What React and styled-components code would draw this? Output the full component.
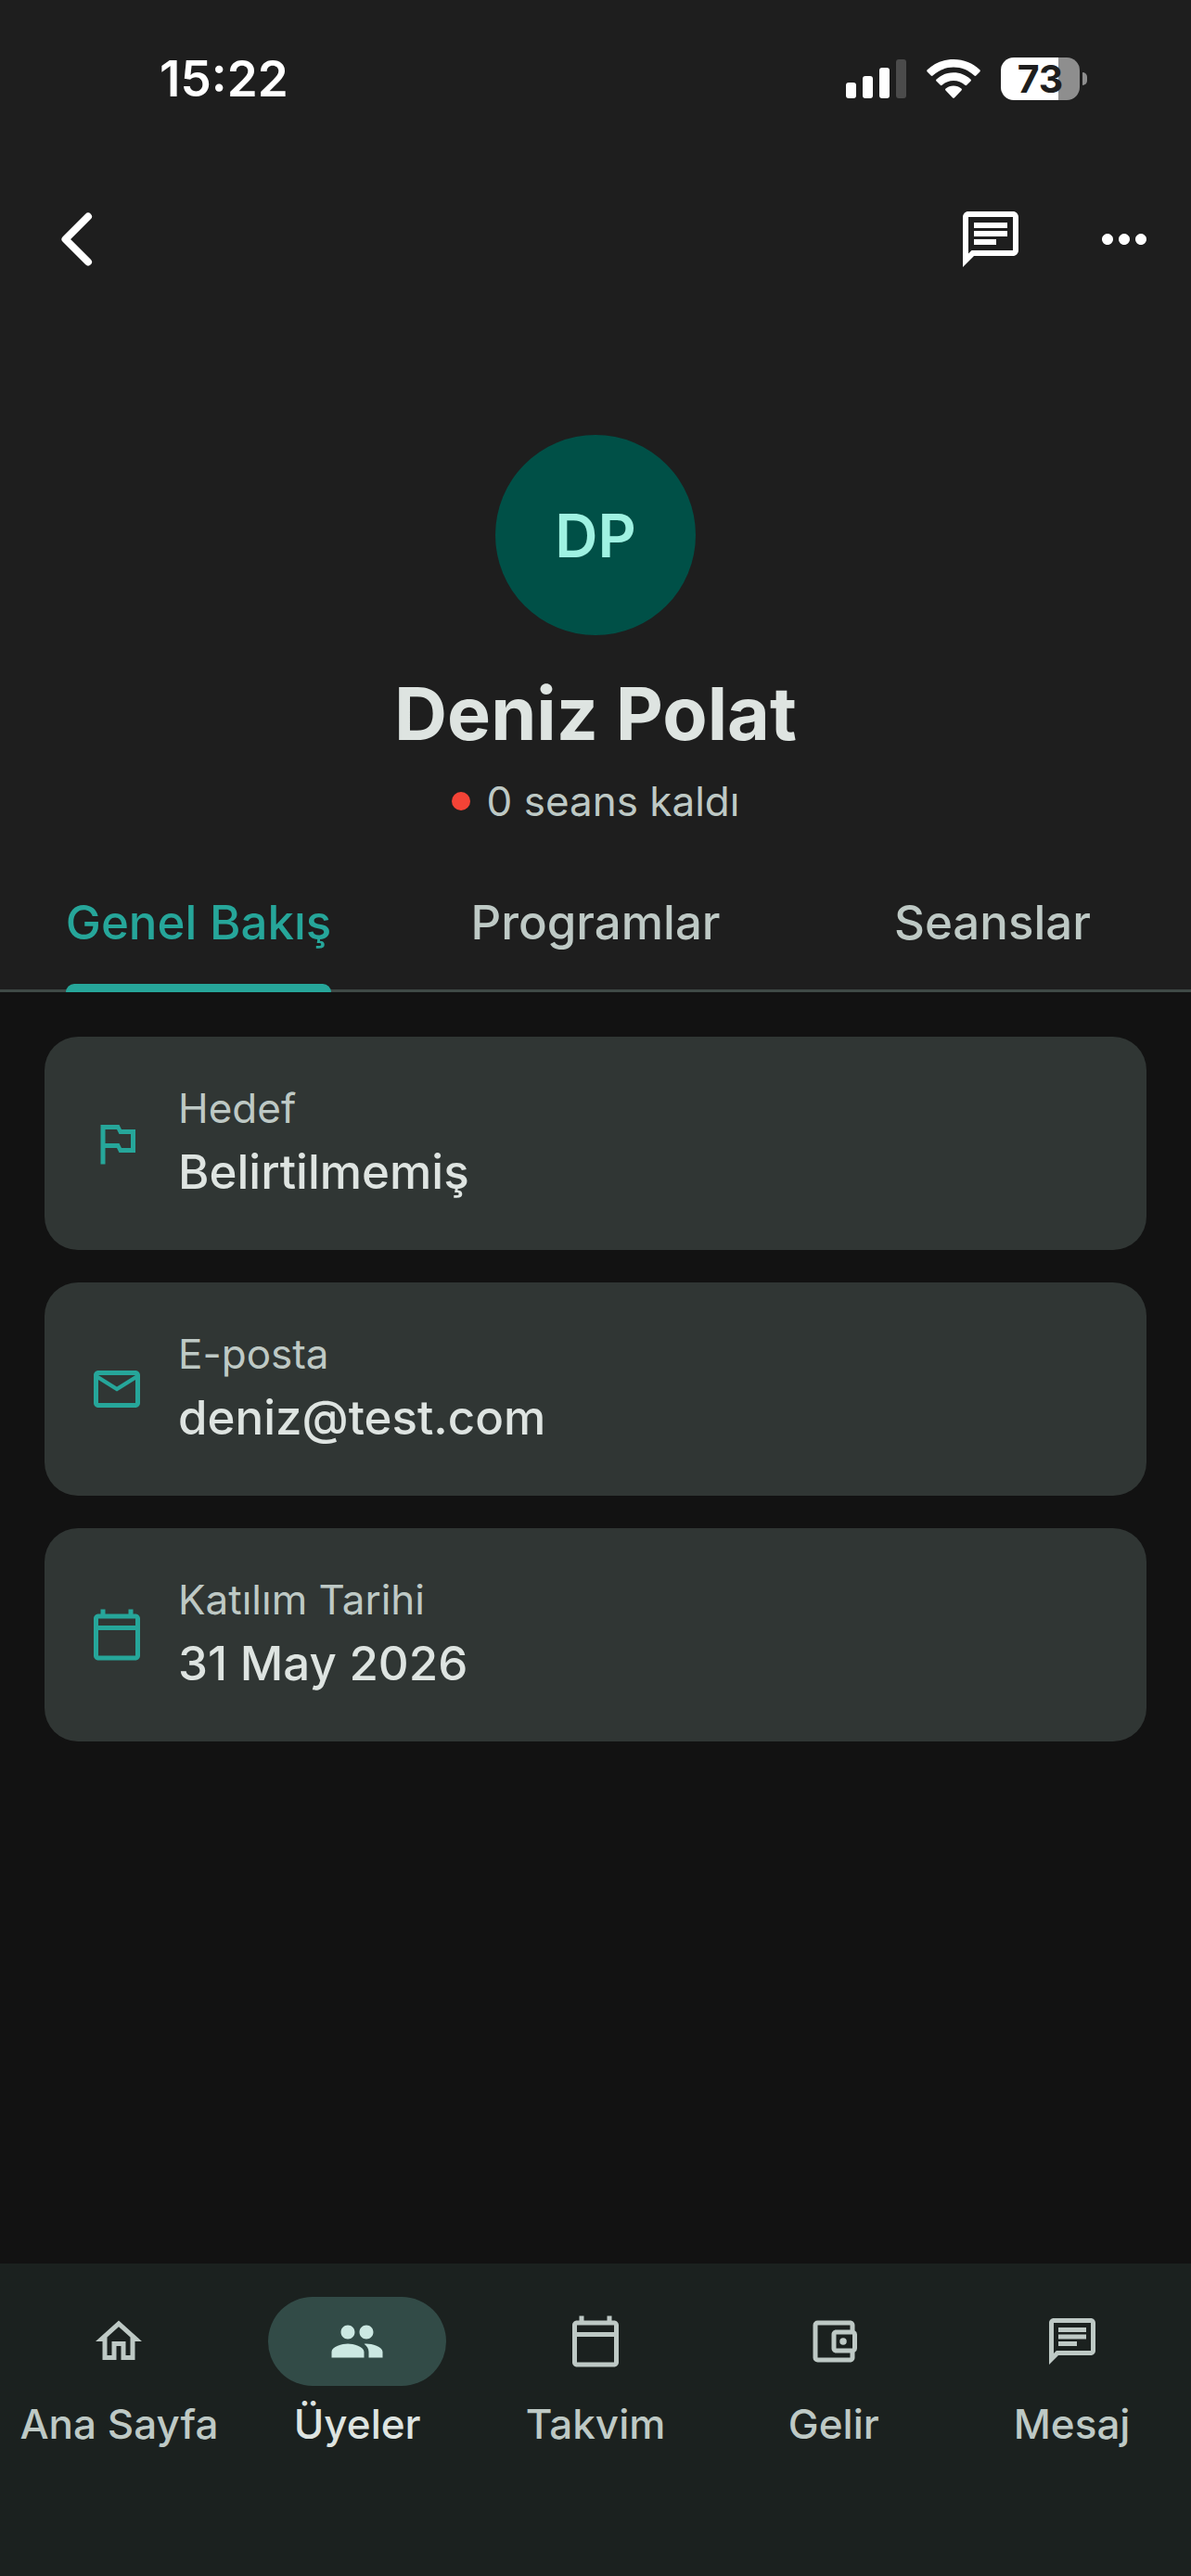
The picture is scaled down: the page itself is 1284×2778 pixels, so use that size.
import React, { useState } from 'react'
import styled, { createGlobalStyle } from 'styled-components'
import {
  MdMailOutline,
  MdMoreHoriz,
  MdOutlineAccountBalanceWallet,
  MdOutlineCalendarToday,
  MdOutlineChat,
  MdOutlineHome,
  MdOutlinedFlag,
  MdPeople,
} from 'react-icons/md'

const colors = {
  background: '#121212',
  header: '#1e1e1e',
  card: '#303634',
  nav: '#1b211f',
  pill: '#324b47',
  pillIcon: '#cce8e2',
  teal: '#26a69a',
  avatar: '#005047',
  avatarText: '#9ff2e2',
  text: '#dee4e1',
  muted: '#bec9c5',
  divider: '#3f4946',
  red: '#f44336',
  white: '#ffffff',
}

const tabs = ['Genel Bakış', 'Programlar', 'Seanslar']

const details = [
  { label: 'Hedef', value: 'Belirtilmemiş', Icon: MdOutlinedFlag },
  { label: 'E-posta', value: 'deniz@test.com', Icon: MdMailOutline },
  { label: 'Katılım Tarihi', value: '31 May 2026', Icon: MdOutlineCalendarToday },
]

const navigationOptions = [
  { text: 'Ana Sayfa', Icon: MdOutlineHome },
  { text: 'Üyeler', Icon: MdPeople, active: true },
  { text: 'Takvim', Icon: MdOutlineCalendarToday },
  { text: 'Gelir', Icon: MdOutlineAccountBalanceWallet },
  { text: 'Mesaj', Icon: MdOutlineChat },
]

const GlobalStyle = createGlobalStyle`
  * {
    box-sizing: border-box;
  }

  body {
    margin: 0;
    background: ${colors.background};
    color: ${colors.text};
    font-family: Inter, Roboto, sans-serif;
    font-optical-sizing: none;
  }

  button {
    padding: 0;
    border: 0;
    background: none;
    color: inherit;
    font: inherit;
    cursor: pointer;
  }

  svg {
    display: block;
    flex: none;
  }
`

const Page = styled.div`
  display: flex;
  flex-direction: column;
  min-height: 100vh;
`

const Header = styled.header`
  background: ${colors.header};
`

const StatusBar = styled.div`
  display: flex;
  justify-content: space-between;
  align-items: center;
  height: 174px;
  padding: 0 112px 4px 172px;
  color: ${colors.white};
`

const Clock = styled.time`
  font-size: 53px;
  font-weight: 600;
  line-height: 64px;
`

const StatusIcons = styled.div`
  display: flex;
  align-items: center;
  gap: 22px;
`

const Battery = styled.div`
  display: flex;
  align-items: center;
  gap: 3px;
`

const BatteryBody = styled.div`
  width: 85px;
  border-radius: 14px;
  background: linear-gradient(to right, ${colors.white} 73%, #8e8e8e 73%);
  color: ${colors.header};
  font-size: 41px;
  font-weight: 700;
  line-height: 46px;
  text-align: center;
`

const BatteryTip = styled.div`
  width: 5px;
  height: 14px;
  border-radius: 0 7px 7px 0;
  background: #8e8e8e;
`

const Toolbar = styled.div`
  display: flex;
  align-items: center;
  height: 168px;
  color: ${colors.white};
`

const ToolbarButton = styled.button`
  display: flex;
  justify-content: center;
  align-items: center;
  width: ${({ $wide }) => ($wide ? 166 : 144)}px;
  height: 144px;
  font-size: 72px;
`

const ToolbarSpacer = styled.div`
  flex: 1;
`

const Profile = styled.section`
  display: flex;
  flex-direction: column;
  align-items: center;
  padding: 127px 48px 33px;
`

const Avatar = styled.div`
  display: flex;
  justify-content: center;
  align-items: center;
  width: 216px;
  height: 216px;
  border-radius: 50%;
  background: ${colors.avatar};
  color: ${colors.avatarText};
  font-size: 64px;
  font-weight: 600;
`

const Name = styled.h1`
  margin: 36px 0 18px;
  font-size: 79px;
  font-weight: 700;
  line-height: 96px;
`

const Sessions = styled.div`
  display: flex;
  align-items: center;
  gap: 18px;
  color: ${colors.muted};
  font-size: 44px;
  line-height: 58px;
`

const Dot = styled.span`
  width: 20px;
  height: 20px;
  border-radius: 50%;
  background: ${colors.red};
`

const TabList = styled.div`
  display: grid;
  grid-template-columns: repeat(3, 1fr);
  box-shadow: inset 0 -3px ${colors.divider};
`

const Tab = styled.button`
  display: flex;
  justify-content: center;
  height: 144px;
  color: ${({ $active }) => ($active ? colors.teal : colors.muted)};
`

const TabLabel = styled.span`
  display: flex;
  flex-direction: column;
  justify-content: space-between;
  padding-top: 33px;
  font-size: 51px;
  font-weight: 500;
  line-height: 72px;

  &::after {
    content: '';
    height: 9px;
    border-radius: 9px 9px 0 0;
    background: ${({ $active }) => ($active ? colors.teal : 'none')};
  }
`

const Content = styled.main`
  display: flex;
  flex-direction: column;
  flex: 1;
  gap: 35px;
  padding: 48px;
`

const Card = styled.article`
  display: flex;
  align-items: center;
  gap: 36px;
  padding: 48px;
  border-radius: 36px;
  background: ${colors.card};

  > svg {
    color: ${colors.teal};
    font-size: 60px;
  }
`

const CardText = styled.div`
  display: flex;
  flex-direction: column;
  gap: 4px;
`

const CardLabel = styled.span`
  color: ${colors.muted};
  font-size: 44px;
  line-height: 58px;
`

const CardValue = styled.span`
  font-size: 51px;
  font-weight: 500;
  line-height: 72px;
`

const BottomNav = styled.nav`
  display: grid;
  grid-template-columns: repeat(5, 1fr);
  padding: 36px 0 135px;
  background: ${colors.nav};
`

const NavItem = styled.a`
  display: flex;
  flex-direction: column;
  align-items: center;
  gap: 12px;
  color: ${({ $active }) => ($active ? colors.text : colors.muted)};
  font-size: 44px;
  font-weight: 500;
  line-height: 58px;
  text-decoration: none;
  white-space: nowrap;
`

const NavPill = styled.span`
  display: flex;
  justify-content: center;
  align-items: center;
  width: 192px;
  height: 96px;
  border-radius: 48px;
  background: ${({ $active }) => ($active ? colors.pill : 'none')};
  color: ${({ $active }) => ($active ? colors.pillIcon : 'inherit')};
  font-size: 60px;
`

const SignalIcon = () => (
  <svg width="65" height="42" viewBox="0 0 65 42" fill="currentColor">
    <rect x="0" y="25" width="11" height="17" rx="3" />
    <rect x="18" y="18" width="11" height="24" rx="3" />
    <rect x="36" y="9" width="11" height="33" rx="3" />
    <rect x="54" y="0" width="11" height="42" rx="3" fill="#4b4b4b" />
  </svg>
)

const WifiIcon = () => (
  <svg width="58" height="42" viewBox="0 0 58 42" fill="currentColor">
    <path d="M29 0C18 0 8 4.200 .7 11.300c-.7.700-.7 1.400 0 2.100l4 4.100c.6.600 1.300.6 1.900 0C12.700 11.900 20.500 8.600 29 8.600s16.300 3.300 22.400 8.900c.6.600 1.300.6 1.900 0l4-4.100c.7-.7.700-1.400 0-2.100C50 4.200 40 0 29 0z" />
    <path d="M29 14.300c-7.100 0-13.500 2.700-18.400 7.100-.7.700-.7 1.400-.1 2l4.300 4.300c.6.600 1.200.6 1.900.1 3.300-2.900 7.600-4.700 12.300-4.700s9 1.800 12.300 4.700c.7.500 1.300.5 1.900-.1l4.300-4.300c.6-.6.600-1.300-.1-2-4.900-4.400-11.300-7.100-18.400-7.100z" />
    <path d="M29 28.500c-3.200 0-6.100 1.200-8.400 3.100-.7.600-.7 1.300-.1 1.900l7.600 7.900c.6.600 1.200.6 1.800 0l7.600-7.900c.6-.6.600-1.300-.1-1.900-2.300-1.900-5.200-3.100-8.400-3.100z" />
  </svg>
)

const BackIcon = () => (
  <svg
    width="34"
    height="58"
    viewBox="0 0 34 58"
    fill="none"
    stroke="currentColor"
    strokeWidth="8"
    strokeLinecap="round"
    strokeLinejoin="round"
  >
    <path d="M29 4.500L4.500 29L29 53.500" />
  </svg>
)

const App = () => {
  const [activeTab, setActiveTab] = useState(tabs[0])

  return (
    <Page>
      <GlobalStyle />
      <Header>
        <StatusBar>
          <Clock>15:22</Clock>
          <StatusIcons>
            <SignalIcon />
            <WifiIcon />
            <Battery>
              <BatteryBody>73</BatteryBody>
              <BatteryTip />
            </Battery>
          </StatusIcons>
        </StatusBar>
        <Toolbar>
          <ToolbarButton $wide aria-label="Geri">
            <BackIcon />
          </ToolbarButton>
          <ToolbarSpacer />
          <ToolbarButton aria-label="Mesaj gönder">
            <MdOutlineChat />
          </ToolbarButton>
          <ToolbarButton aria-label="Diğer">
            <MdMoreHoriz />
          </ToolbarButton>
        </Toolbar>
        <Profile>
          <Avatar>DP</Avatar>
          <Name>Deniz Polat</Name>
          <Sessions>
            <Dot />
            <span>0 seans kaldı</span>
          </Sessions>
        </Profile>
        <TabList role="tablist">
          {tabs.map(text => (
            <Tab
              key={text}
              role="tab"
              aria-selected={text === activeTab}
              $active={text === activeTab}
              onClick={() => setActiveTab(text)}
            >
              <TabLabel $active={text === activeTab}>{text}</TabLabel>
            </Tab>
          ))}
        </TabList>
      </Header>
      <Content>
        {details.map(({ label, value, Icon }) => (
          <Card key={label}>
            <Icon />
            <CardText>
              <CardLabel>{label}</CardLabel>
              <CardValue>{value}</CardValue>
            </CardText>
          </Card>
        ))}
      </Content>
      <BottomNav>
        {navigationOptions.map(({ text, Icon, active }) => (
          <NavItem key={text} href="#" $active={active}>
            <NavPill $active={active}>
              <Icon />
            </NavPill>
            {text}
          </NavItem>
        ))}
      </BottomNav>
    </Page>
  )
}

export default App
